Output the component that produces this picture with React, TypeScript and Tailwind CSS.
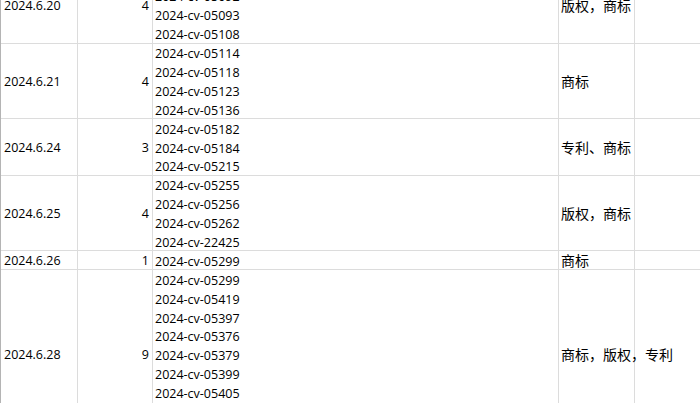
import React from "react";

type Row = {
  date: string;
  count: number;
  cases: string[];
  kind: string;
  h: string;
};

const rows: Row[] = [
  {
    date: "2024.6.20",
    count: 4,
    cases: ["2024-cv-05091", "2024-cv-05092", "2024-cv-05093", "2024-cv-05108"],
    kind: "版权，商标",
    h: "h-[77px]",
  },
  {
    date: "2024.6.21",
    count: 4,
    cases: ["2024-cv-05114", "2024-cv-05118", "2024-cv-05123", "2024-cv-05136"],
    kind: "商标",
    h: "h-[75px]",
  },
  {
    date: "2024.6.24",
    count: 3,
    cases: ["2024-cv-05182", "2024-cv-05184", "2024-cv-05215"],
    kind: "专利、商标",
    h: "h-[57px]",
  },
  {
    date: "2024.6.25",
    count: 4,
    cases: ["2024-cv-05255", "2024-cv-05256", "2024-cv-05262", "2024-cv-22425"],
    kind: "版权，商标",
    h: "h-[75px]",
  },
  {
    date: "2024.6.26",
    count: 1,
    cases: ["2024-cv-05299"],
    kind: "商标",
    h: "h-[19px]",
  },
  {
    date: "2024.6.28",
    count: 9,
    cases: [
      "2024-cv-05299",
      "2024-cv-05419",
      "2024-cv-05397",
      "2024-cv-05376",
      "2024-cv-05379",
      "2024-cv-05399",
      "2024-cv-05405",
      "2024-cv-05417",
      "2024-cv-05421",
    ],
    kind: "商标，版权，专利",
    h: "h-[170px]",
  },
];

const cell = "border-r border-[#dcdcdc] flex items-center shrink-0";

export default function App() {
  return (
    <div
      className="w-[700px] h-[403px] overflow-hidden bg-white text-black"
      style={{ fontFamily: '"Open Sans", "Noto Sans CJK SC", sans-serif' }}
    >
      <div className="-mt-[33px] border-l border-[#b4b4b4] text-[12.5px]">
        {rows.map((r) => (
          <div key={r.date} className={`flex border-b border-[#dcdcdc] ${r.h}`}>
            <div className={`${cell} w-[77px] pl-[3px] pt-[2px]`}>{r.date}</div>
            <div className={`${cell} w-[75px] justify-end pr-[3px] pt-[2px]`}>{r.count}</div>
            <div className={`${cell} w-[406px] pl-[2px]`}>
              <div className="flex flex-col mt-[4px]">
                {r.cases.map((c, i) => (
                  <div key={i} className="leading-[18.8px] whitespace-nowrap">
                    {c}
                  </div>
                ))}
              </div>
            </div>
            <div
              className={`${cell} w-[76px] pl-[2px] text-[14px] whitespace-nowrap`}
              style={{ fontFamily: '"Noto Sans CJK SC", sans-serif' }}
            >
              {r.kind}
            </div>
            <div className="flex-1" />
          </div>
        ))}
      </div>
    </div>
  );
}
